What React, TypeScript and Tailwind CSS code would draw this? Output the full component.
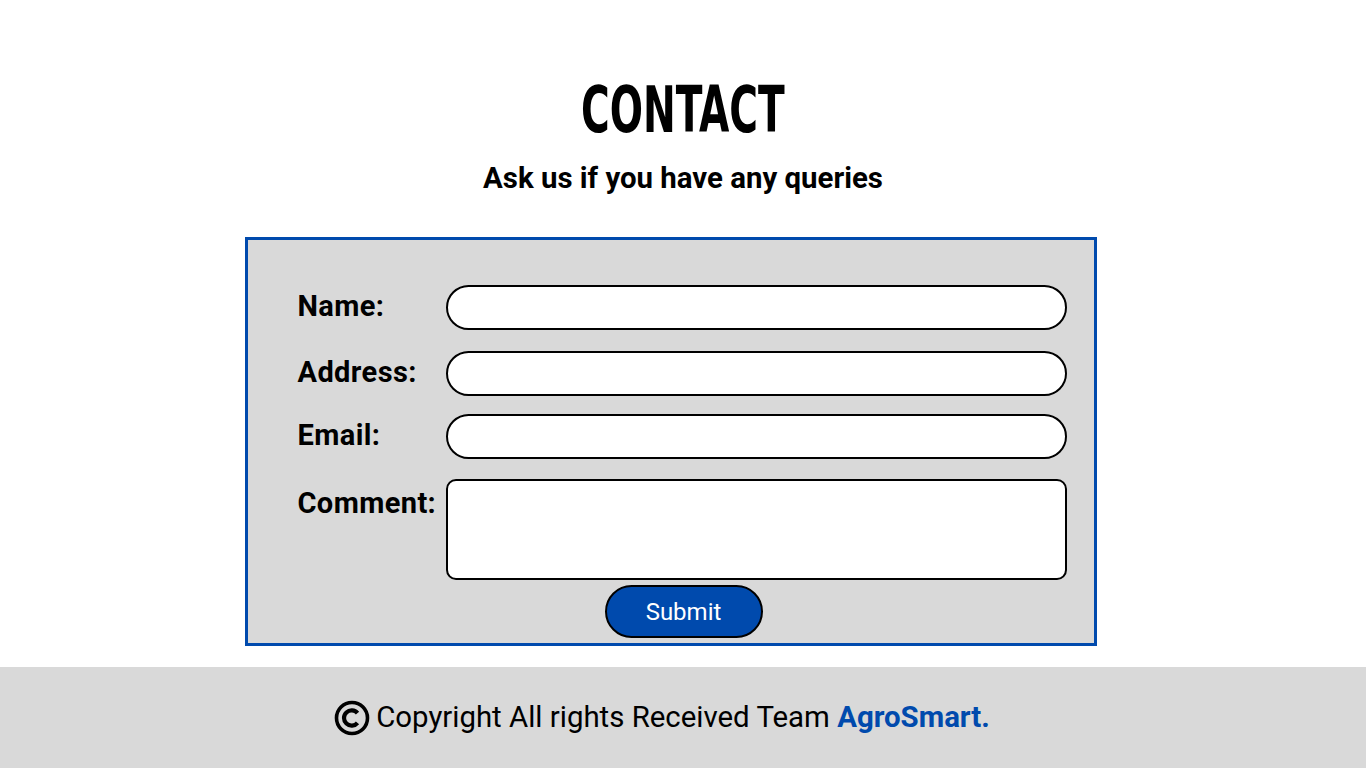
import React from "react";

function CopyIcon() {
  return (
    <svg width="36" height="36" viewBox="0 0 36 36" className="shrink-0">
      <circle cx="18" cy="18" r="15.5" fill="none" stroke="black" strokeWidth="3.6" />
      <path d="M23.5 13.2 A7.6 7.6 0 1 0 23.5 22.8" fill="none" stroke="black" strokeWidth="4.2" strokeLinecap="butt" />
    </svg>
  );
}

export default function App() {
  const roboto = { fontFamily: "Roboto, 'Liberation Sans', sans-serif" };
  const label = "w-[148px] text-[29px] font-bold text-black leading-[30px] tracking-[0.4px]";
  return (
    <div className="w-[1366px] min-h-[768px] bg-white flex flex-col" style={roboto}>
      <div className="flex flex-col items-center pt-[74px]">
        <h1
          className="text-[64px] leading-[72px] font-bold text-black scale-x-[0.68]"
          style={{ fontFamily: "'Liberation Sans Narrow', 'DejaVu Sans Condensed', sans-serif" }}
        >
          CONTACT
        </h1>
        <p className="mt-[16px] text-[29.4px] leading-[32px] font-bold text-black">Ask us if you have any queries</p>
      </div>
      <div className="flex justify-center mt-[43px] pr-[25px]">
        <form className="w-[852px] h-[409px] border-[3px] border-[#004aad] bg-[#d9d9d9] pt-[45px] pl-[50px] flex flex-col">
          <div className="flex items-center h-[45px]">
            <label className={`${label} -mt-[4px]`}>Name:</label>
            <input className="w-[621px] h-[45px] rounded-full border-2 border-black bg-white" />
          </div>
          <div className="flex items-center h-[45px] mt-[21px]">
            <label className={`${label} -mt-[4px]`}>Address:</label>
            <input className="w-[621px] h-[45px] rounded-full border-2 border-black bg-white" />
          </div>
          <div className="flex items-center h-[45px] mt-[18px]">
            <label className={`${label} -mt-[4px]`}>Email:</label>
            <input className="w-[621px] h-[45px] rounded-full border-2 border-black bg-white" />
          </div>
          <div className="flex items-start mt-[20px]">
            <label className={`${label} mt-[9px]`}>Comment:</label>
            <textarea className="w-[621px] h-[101px] rounded-[10px] border-2 border-black bg-white resize-none" />
          </div>
          <div className="flex justify-center mt-[5px] pr-[24px]">
            <button
              type="button"
              className="w-[158px] h-[53px] rounded-full border-2 border-black bg-[#004aad] text-white text-[24px] leading-none"
            >
              Submit
            </button>
          </div>
        </form>
      </div>
      <footer className="mt-[21px] h-[101px] bg-[#d9d9d9] flex items-center justify-center gap-[6px] pr-[42px]">
        <CopyIcon />
        <span className="text-[29.4px] text-black leading-none">
          Copyright All rights Received Team <span className="font-bold text-[#004aad]">AgroSmart.</span>
        </span>
      </footer>
    </div>
  );
}
